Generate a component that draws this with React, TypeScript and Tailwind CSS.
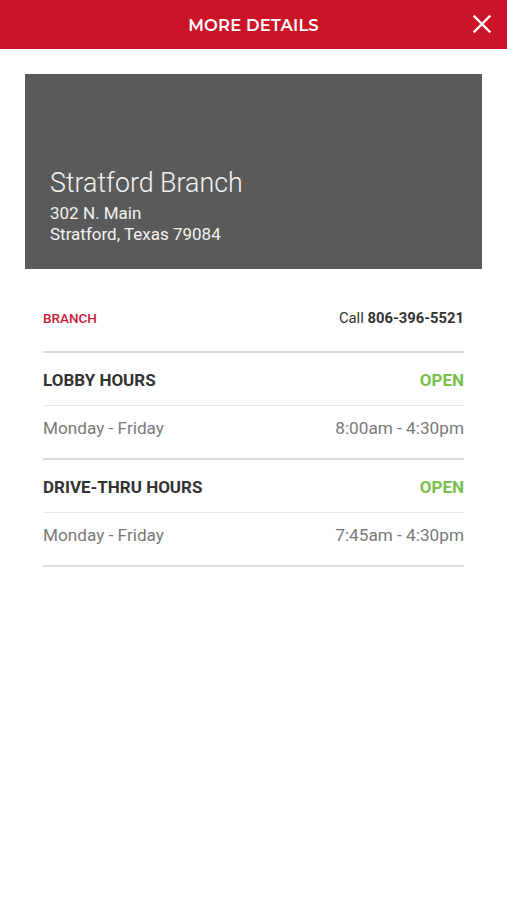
import React from 'react'

type HoursBlock = {
  title: string
  status: string
  days: string
  hours: string
}

const blocks: HoursBlock[] = [
  { title: 'LOBBY HOURS', status: 'OPEN', days: 'Monday - Friday', hours: '8:00am - 4:30pm' },
  { title: 'DRIVE-THRU HOURS', status: 'OPEN', days: 'Monday - Friday', hours: '7:45am - 4:30pm' },
]

const CloseIcon = () => (
  <svg width="18" height="18" viewBox="0 0 18 18" fill="none">
    <path d="M1.5 1.5 L16.5 16.5 M16.5 1.5 L1.5 16.5" stroke="white" strokeWidth="2.4" strokeLinecap="square" />
  </svg>
)

export default function App() {
  return (
    <div className="min-h-[900px] w-[507px] bg-white font-['Roboto',sans-serif]">
      <header className="relative flex h-[49px] items-center justify-center bg-[#cc1429] pt-[1px]">
        <h1 className="font-['Montserrat','Open_Sans',sans-serif] text-[16.4px] font-semibold tracking-[0.2px] text-white">
          MORE DETAILS
        </h1>
        <button className="absolute right-[16px] top-[15px]">
          <CloseIcon />
        </button>
      </header>

      <div className="px-[25px] pt-[25px]">
        <div className="flex h-[195px] flex-col justify-end bg-[#5a5a5a] px-[25px] pb-[24px] text-white">
          <h2 className="text-[26.8px] font-light leading-[32px] text-[#f2f2f2]">Stratford Branch</h2>
          <p className="mt-[4px] text-[17px] leading-[21px] text-[#f2f2f2]">302 N. Main</p>
          <p className="text-[17px] leading-[21px] text-[#f2f2f2]">Stratford, Texas 79084</p>
        </div>
      </div>

      <div className="px-[43px]">
        <div className="flex h-[84px] items-center justify-between border-b-2 border-[#dcdcdc] pt-[16px]">
          <span className="text-[13.5px] font-medium text-[#c8203a]">BRANCH</span>
          <span className="text-[14.8px] text-[#333]">
            Call <span className="font-bold">806-396-5521</span>
          </span>
        </div>

        {blocks.map((b) => (
          <div key={b.title} className="border-b-2 border-[#dcdcdc]">
            <div className="flex h-[53px] items-center justify-between border-b border-[#e8e8e8] pt-[4px]">
              <span className="text-[17px] font-bold text-[#333]">{b.title}</span>
              <span className="text-[17px] font-bold text-[#78c04a]">{b.status}</span>
            </div>
            <div className="flex h-[52px] items-center justify-between pb-[6px]">
              <span className="text-[17.2px] text-[#7a7a7a]">{b.days}</span>
              <span className="text-[17.2px] text-[#7a7a7a]">{b.hours}</span>
            </div>
          </div>
        ))}
      </div>
    </div>
  )
}
